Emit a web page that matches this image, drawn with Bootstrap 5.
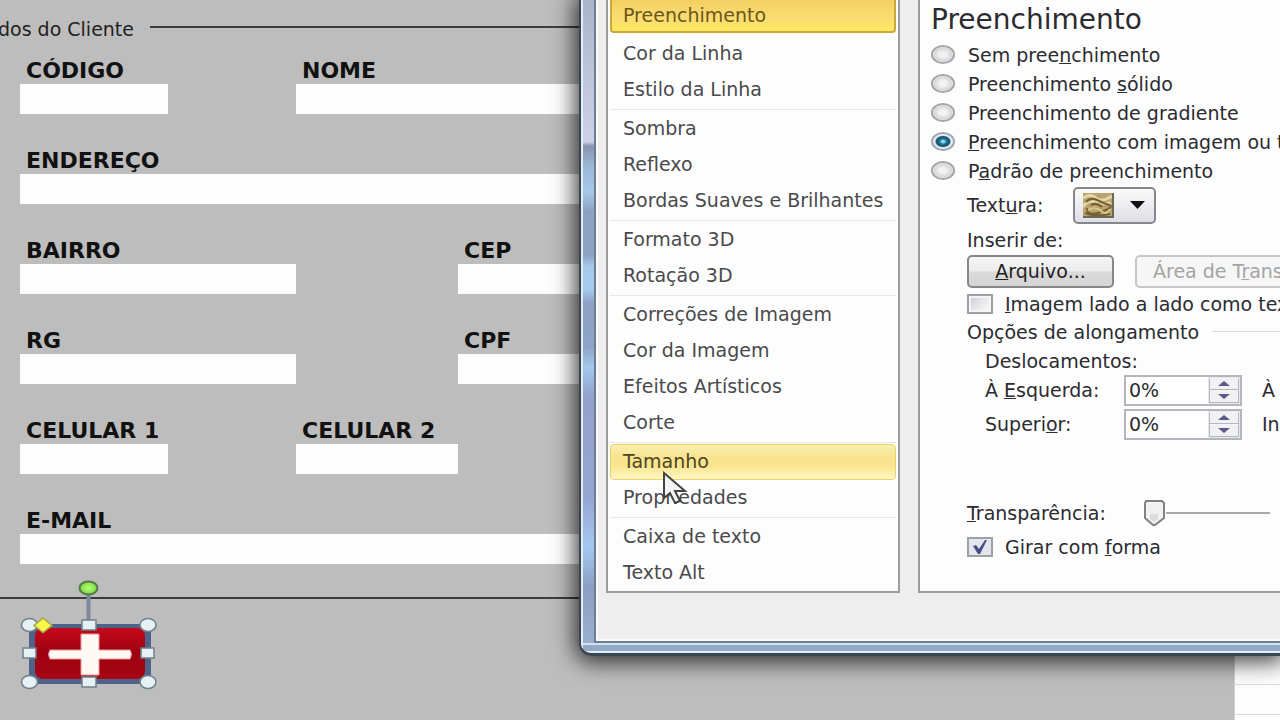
<!DOCTYPE html>
<html lang="pt-BR">
<head>
<meta charset="utf-8">
<meta name="viewport" content="width=device-width, initial-scale=1">
<title>Formatar Imagem</title>
<link href="https://cdn.jsdelivr.net/npm/bootstrap@5.3.0/dist/css/bootstrap.min.css" rel="stylesheet">
<script src="https://cdn.jsdelivr.net/npm/bootstrap@5.3.0/dist/js/bootstrap.bundle.min.js"></script>
<style>
  body { background: #bdbdbd; color: #222; font-family: "DejaVu Sans", sans-serif; font-size: 19px; line-height: 28px; }
  .stage { min-height: 100vh; }

  /* worksheet form */
  .legend-row { height: 58px; }
  .legend-text { width: 134px; white-space: nowrap; }
  .rule { height: 2px; background: #3c3c3c; }
  .legend-row .rule { margin-bottom: 4px; }
  .client-grid { display: grid; grid-template-columns: 148px 128px 162px 1fr; row-gap: 34px; padding-left: 20px; }
  .span-two { grid-column: span 2; }
  .from-third { grid-column: 3 / span 2; }
  .in-third { grid-column: 3; }
  .in-fourth { grid-column: 4; }
  .full-row { grid-column: 1 / -1; }
  .client-grid label { display: block; height: 26px; line-height: 26px; padding-left: 6px; font-weight: 700; font-size: 22px; color: #111; white-space: nowrap; }
  .client-grid input { height: 30px; border: 0; border-radius: 0; background: #fdfdfd; padding: 0 6px; }
  .closing-rule { margin-top: 33px; }
  .cells { width: 46px; background: repeating-linear-gradient(#fdfdfd 0 29px, #d9d9d9 29px 30px) 0 25px; border-left: 1px solid #d0d0d0; }
  .shape-area { height: 110px; }
  .shape-art { position: absolute; left: 16px; top: -22px; }

  /* dialog window */
  .dialog-win { position: absolute; left: 579px; right: 0; top: -3px; padding: 0 0 10px 13px; border-left: 2px solid #3a4552; border-bottom: 3px solid #3a4552; border-bottom-left-radius: 12px;
    background: linear-gradient(90deg, #e4ecf8 0 2px, transparent 2px 13px), linear-gradient(0deg, #e6f0fa 0 2px, #93abc6 2px 8px, #d5e2f0 8px 10px, transparent 10px),
      linear-gradient(#aab4c8, #bfc6da 80px, #cdd0e6 145px, #8795b0 149px, #9cb8d8 170px, #a6c8ea 195px, #8ba2c2 215px, #8ea3c4 258px, #a6cbee 270px, #a6cbee 292px, #8ea0c3 306px, #8ea4c6 350px, #a3c8ee 370px, #93a2cc 400px, #97a5d2 500px, #a3c8f0 550px, #8d9fc3 590px, #9db2d2);
    box-shadow: 0 2px 22px 4px rgba(0,0,0,.75); }
  .dialog-face { background: #eee; border-left: 2px solid #6f7d93; border-bottom: 2px solid #6f7d93; padding: 0 0 48px 10px; gap: 18px; box-shadow: inset 2px -2px #fbfbfb; }
  .pane { background: #fdfdfd; border: 2px solid #999da2; border-top: 0; }
  .cat-pane { width: 294px; padding: 0 2px; }
  .cat-pane .list-group-item { position: relative; height: 36px; padding: 0 0 0 12px; line-height: 33px; border: 1px solid transparent; border-radius: 4px; background: transparent; color: #4a4a4c; white-space: nowrap; }
  .cat-pane hr { margin: 1px 0; border-color: #e6e8ea; opacity: 1; }
  .cat-pane .first-gap { height: 3px; }
  .cat-pane .list-group-item.active { background: linear-gradient(#f3cf62, #fbdd72 60%, #fde960); border: 2px solid #c9a83c; padding-left: 11px; line-height: 32px; color: #6b5620; }
  .cat-pane .list-group-item.hovered { background: linear-gradient(#f9efb0, #f8e392 35%, #f9e58d 60%, #fff8c4); border-color: #e6d46a; color: #4c4424; }
  .pointer-icon { position: absolute; left: 51px; top: 26px; z-index: 3; }

  .opt-pane { padding-left: 11px; border-right: 0; white-space: nowrap; min-width: 0; color: #2b2b30; }
  .opt-pane h1 { margin: 0; height: 43px; line-height: 46px; font-size: 28px; font-weight: 400; }
  .opt-line { display: flex; align-items: center; height: 29px; }
  .in-one { padding-left: 36px; }
  .in-two { padding-left: 54px; }
  .radio-oval { appearance: none; flex: none; width: 24px; height: 19px; margin: 0 13px 0 0; border: 2px solid #a3a5a8; border-radius: 50%; background: radial-gradient(#f2f2f2 25%, #d4d6d8 60%, #fafafa 72%); }
  .radio-oval:checked { border-color: #9aa9b5; background: radial-gradient(ellipse at center, #9fe0f4 0 8%, #1b7ca3 24%, #174a66 46%, #e6eef3 58%); }
  .tick { appearance: none; flex: none; width: 26px; height: 20px; margin: 0 12px 0 0; border: 2px solid #9da0a5; background: linear-gradient(135deg, #cfd2d6, #fafafa) content-box, #f4f4f4; padding: 2px; }
  .tick:checked { background: url("data:image/svg+xml,%3Csvg xmlns='http://www.w3.org/2000/svg' viewBox='0 0 22 16'%3E%3Cpath d='M4 7l3-1 3 4 6-9 2 0-7 14h-2z' fill='%23454f86'/%3E%3C/svg%3E") center / 22px 16px no-repeat, #e4e6ee; }
  .win-btn { border: 2px solid #85878b; border-radius: 5px; background: linear-gradient(#f5f5f5, #ececec 48%, #dadada 52%, #d5d5d5); padding: 0; line-height: 26px; color: #222; flex: none; }
  .file-btn { width: 147px; height: 33px; margin-right: 21px; }
  .clip-btn { width: 250px; height: 33px; padding-left: 16px; text-align: left; }
  .clip-btn:disabled { background: #f6f6f6; border-color: #c6c7c9; color: #a4a4a4; }
  .tex-btn { width: 83px; height: 37px; margin-left: 30px; background: linear-gradient(#fafafa, #dedfe6); }
  .h-tall { height: 40px; }
  .h-btn { height: 34px; }
  .h-check { height: 31px; }
  .h-low { height: 25px; }
  .spin { width: 118px; height: 31px; border: 2px solid #b4b6bd; background: #fff; }
  .spin input { min-width: 0; width: 40px; border: 0; padding: 0 0 0 3px; background: transparent; color: #2b2b30; }
  .spin-keys { width: 32px; flex: none; padding: 1px; background: #e8e9ee; }
  .spin-keys button { border: 1px solid #b4b6bd; border-top-color: #f4f4f4; background: #f1f1f4; padding: 0; line-height: 0; }
  .spin-label { width: 139px; flex: none; }
  .thin-line { height: 1px; background: #dcdcdc; margin-left: 13px; }
  .before-slider { margin-top: 55px; }
  .slide { appearance: none; width: 128px; height: 28px; margin-left: 36px; background: linear-gradient(#a8a9ac, #a8a9ac) center / 100% 2px no-repeat; }
  .slide::-webkit-slider-thumb { appearance: none; width: 24px; height: 28px; background: #fdfdfd url("data:image/svg+xml,%3Csvg xmlns='http://www.w3.org/2000/svg' viewBox='0 0 24 28'%3E%3Cpath d='M4 2h16l2 2v15l-9 7h-2l-8-7V4z' fill='%23f1f1f1' stroke='%23808286' stroke-width='2'/%3E%3Cpath d='M8 15h8v5l-4 3-4-3z' fill='%23dcdcdc'/%3E%3C/svg%3E") center / 24px 28px no-repeat; }
</style>
</head>
<body>
<div class="stage d-flex position-relative overflow-hidden">
  <form class="flex-grow-1" id="cliente">
    <div class="legend-row d-flex align-items-center">
      <div class="legend-text d-flex justify-content-end flex-shrink-0"><span>dos do Cliente</span></div>
      <div class="rule flex-grow-1 ms-3"></div>
    </div>
    <div class="client-grid">
      <div><label for="codigo">CÓDIGO</label><input class="d-block w-100" id="codigo" type="text"></div>
      <div class="from-third"><label for="nome">NOME</label><input class="d-block w-100" id="nome" type="text"></div>
      <div class="full-row"><label for="endereco">ENDEREÇO</label><input class="d-block w-100" id="endereco" type="text"></div>
      <div class="span-two"><label for="bairro">BAIRRO</label><input class="d-block w-100" id="bairro" type="text"></div>
      <div class="in-fourth"><label for="cep">CEP</label><input class="d-block w-100" id="cep" type="text"></div>
      <div class="span-two"><label for="rg">RG</label><input class="d-block w-100" id="rg" type="text"></div>
      <div class="in-fourth"><label for="cpf">CPF</label><input class="d-block w-100" id="cpf" type="text"></div>
      <div><label for="cel1">CELULAR 1</label><input class="d-block w-100" id="cel1" type="text"></div>
      <div class="in-third"><label for="cel2">CELULAR 2</label><input class="d-block w-100" id="cel2" type="text"></div>
      <div class="full-row"><label for="email">E-MAIL</label><input class="d-block w-100" id="email" type="text"></div>
    </div>
    <div class="rule closing-rule"></div>
    <div class="shape-area position-relative">
      <svg class="shape-art" width="148" height="118" viewBox="16 577 148 118" role="img" aria-label="Botão com cruz branca">
        <defs>
          <linearGradient id="red" x2="0" y2="1"><stop offset="0" stop-color="#c40a1c"/><stop offset=".5" stop-color="#9c0010"/><stop offset="1" stop-color="#a80714"/></linearGradient>
          <radialGradient id="grn"><stop offset="0" stop-color="#b9ff7a"/><stop offset="1" stop-color="#78dc3a"/></radialGradient>
        </defs>
        <path d="M88.500 594v30" stroke="#7f87a0" stroke-width="4"/>
        <rect x="29" y="624" width="122" height="60" fill="#4f6289"/>
        <rect x="35" y="628" width="110" height="51" rx="8" fill="url(#red)"/>
        <path d="M81 634h18v16h31q3 4 0 9h-31v16H81v-16H50q-3-5 0-9h31z" fill="#fff8f5" stroke="#e9949a"/>
        <g fill="#e6f1f6" stroke="#708088" stroke-width="1.500">
          <ellipse cx="29.500" cy="625" rx="8" ry="6.500"/><ellipse cx="148" cy="625" rx="8" ry="6.500"/>
          <ellipse cx="29.500" cy="682" rx="8" ry="6.500"/><ellipse cx="148" cy="682" rx="8" ry="6.500"/>
          <rect x="82" y="620" width="14" height="10"/><rect x="82" y="677" width="14" height="10"/>
          <rect x="23" y="648" width="13" height="10"/><rect x="141" y="648" width="13" height="10"/>
        </g>
        <ellipse cx="88.500" cy="588" rx="9" ry="6.500" fill="url(#grn)" stroke="#587a4a" stroke-width="2"/>
        <path d="M43 618l9 7.500-9 7-9-7z" fill="#fbf84a" stroke="#a5a54a" stroke-width="1.500"/>
      </svg>
    </div>
  </form>
  <div class="cells flex-shrink-0"></div>

  <section class="dialog-win" aria-label="Formatar Imagem">
    <div class="dialog-face d-flex">
      <div class="pane cat-pane flex-shrink-0">
        <div class="list-group list-group-flush">
          <a href="#" class="list-group-item active">Preenchimento</a>
          <div class="first-gap"></div>
          <a href="#" class="list-group-item">Cor da Linha</a>
          <a href="#" class="list-group-item">Estilo da Linha</a>
          <hr>
          <a href="#" class="list-group-item">Sombra</a>
          <a href="#" class="list-group-item">Reflexo</a>
          <a href="#" class="list-group-item">Bordas Suaves e Brilhantes</a>
          <hr>
          <a href="#" class="list-group-item">Formato 3D</a>
          <a href="#" class="list-group-item">Rotação 3D</a>
          <hr>
          <a href="#" class="list-group-item">Correções de Imagem</a>
          <a href="#" class="list-group-item">Cor da Imagem</a>
          <a href="#" class="list-group-item">Efeitos Artísticos</a>
          <a href="#" class="list-group-item">Corte</a>
          <hr>
          <a href="#" class="list-group-item hovered z-1">Tamanho
            <svg class="pointer-icon" width="28" height="34" viewBox="0 0 28 34" aria-hidden="true"><path d="M2 2v25l6-5 5 10 5-2-5-10h10z" fill="#f4f4f4" stroke="#444" stroke-width="2"/></svg>
          </a>
          <a href="#" class="list-group-item">Propriedades</a>
          <hr>
          <a href="#" class="list-group-item">Caixa de texto</a>
          <a href="#" class="list-group-item">Texto Alt</a>
        </div>
      </div>

      <form class="pane opt-pane flex-grow-1 overflow-hidden">
        <h1>Preenchimento</h1>
        <label class="opt-line"><input class="radio-oval" type="radio" name="fill"><span>Sem pree<u>n</u>chimento</span></label>
        <label class="opt-line"><input class="radio-oval" type="radio" name="fill"><span>Preenchimento <u>s</u>ólido</span></label>
        <label class="opt-line"><input class="radio-oval" type="radio" name="fill"><span>Preenchimento de <u>g</u>radiente</span></label>
        <label class="opt-line"><input class="radio-oval" type="radio" name="fill" checked><span><u>P</u>reenchimento com imagem ou textura</span></label>
        <label class="opt-line"><input class="radio-oval" type="radio" name="fill"><span>P<u>a</u>drão de preenchimento</span></label>
        <div class="opt-line h-tall in-one">
          <span>Text<u>u</u>ra:</span>
          <button type="button" class="win-btn tex-btn d-flex align-items-center ps-2" aria-label="Textura">
            <svg width="31" height="25" viewBox="0 0 31 25"><rect width="31" height="25" fill="#b9a26c"/><path d="M0 5Q8 0 13 5T29 3M0 14q5-8 13-5t15 1" stroke="#e3d7aa" stroke-width="3" fill="none"/><path d="M3 9q5-5 11-2t12 5-8 7-14-4M8 12q6-3 11 2M2 20q9 4 25 1" stroke="#75602f" stroke-width="2" fill="none"/><path d="M5 17q8-4 13 1t9-2" stroke="#d8c68c" stroke-width="2" fill="none"/><path d="M30 0v24H0" stroke="#6c6858" stroke-width="2" fill="none"/></svg>
            <svg class="ms-3" width="15" height="8" viewBox="0 0 15 8"><path d="M0 0h15L7.500 8z" fill="#111"/></svg>
          </button>
        </div>
        <div class="opt-line in-one">Inserir de:</div>
        <div class="opt-line h-btn in-one">
          <button type="button" class="win-btn file-btn"><u>A</u>rquivo...</button>
          <button type="button" class="win-btn clip-btn" disabled>Área de T<u>r</u>ansferência</button>
        </div>
        <label class="opt-line h-check in-one"><input class="tick" type="checkbox"><span><u>I</u>magem lado a lado como textura</span></label>
        <div class="opt-line h-low in-one"><span>Opções de alongamento</span><span class="thin-line flex-grow-1"></span></div>
        <div class="opt-line in-two pt-1">Deslocamentos:</div>
        <div class="opt-line h-btn in-two">
          <label class="spin-label" for="esq">À <u>E</u>squerda:</label>
          <div class="spin d-flex flex-shrink-0"><input class="flex-grow-1" id="esq" type="text" value="0%">
            <div class="spin-keys d-flex flex-column"><button type="button" class="flex-fill" aria-label="Aumentar"><svg width="12" height="5" viewBox="0 0 12 5"><path d="M0 5h12L6 0z" fill="#5a5a86"/></svg></button><button type="button" class="flex-fill" aria-label="Diminuir"><svg width="12" height="5" viewBox="0 0 12 5"><path d="M0 0h12L6 5z" fill="#5a5a86"/></svg></button></div></div>
          <span class="ps-3 ms-1">À Direita:</span>
        </div>
        <div class="opt-line h-btn in-two">
          <label class="spin-label" for="sup">Superi<u>o</u>r:</label>
          <div class="spin d-flex flex-shrink-0"><input class="flex-grow-1" id="sup" type="text" value="0%">
            <div class="spin-keys d-flex flex-column"><button type="button" class="flex-fill" aria-label="Aumentar"><svg width="12" height="5" viewBox="0 0 12 5"><path d="M0 5h12L6 0z" fill="#5a5a86"/></svg></button><button type="button" class="flex-fill" aria-label="Diminuir"><svg width="12" height="5" viewBox="0 0 12 5"><path d="M0 0h12L6 5z" fill="#5a5a86"/></svg></button></div></div>
          <span class="ps-3 ms-1">Inferior:</span>
        </div>
        <div class="opt-line h-btn in-one before-slider"><label for="transp"><u>T</u>ransparência:</label><input class="slide" id="transp" type="range" min="0" max="100" value="0"></div>
        <label class="opt-line h-btn in-one"><input class="tick" type="checkbox" checked><span>Girar com <u>f</u>orma</span></label>
      </form>
    </div>
  </section>
</div>
</body>
</html>
